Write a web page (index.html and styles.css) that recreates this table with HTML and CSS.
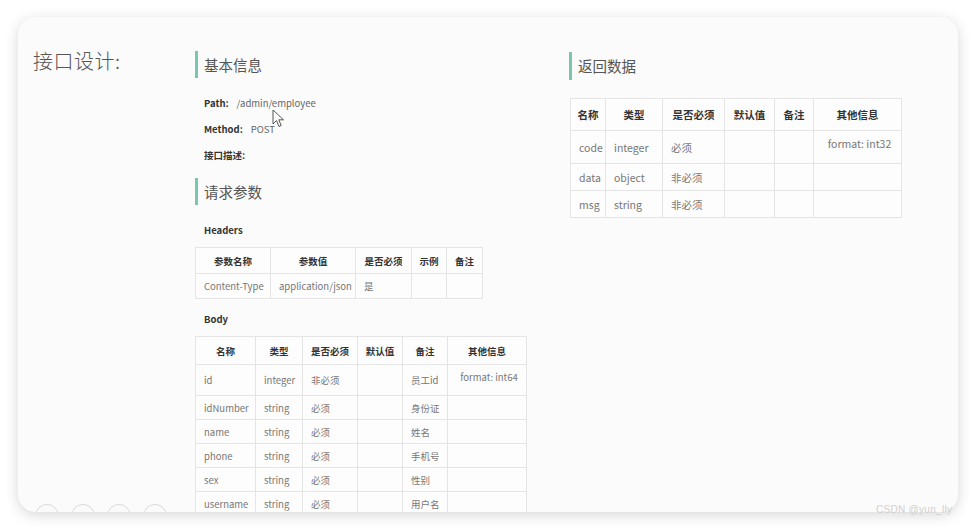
FILE: index.html
```html
<!DOCTYPE html>
<html lang="zh">
<head>
<meta charset="utf-8">
<link rel="stylesheet" href="styles.css">
</head>
<body>
<div class="card">
  <div class="title">接口设计:</div>
  <div class="col-left">
    <div class="heading">基本信息</div>
    <div class="info">
      <div class="line"><b>Path:</b><span class="val">/admin/employee</span></div>
      <div class="line"><b>Method:</b><span class="val">POST</span></div>
      <div class="line"><b>接口描述:</b></div>
    </div>
    <div class="heading h2">请求参数</div>
    <div class="label">Headers</div>
    <table class="tbl t-headers">
      <colgroup><col style="width:75px"><col style="width:85px"><col style="width:56px"><col style="width:35px"><col style="width:36px"></colgroup>
      <tr class="hd"><th>参数名称</th><th>参数值</th><th>是否必须</th><th>示例</th><th>备注</th></tr>
      <tr><td>Content-Type</td><td>application/json</td><td>是</td><td></td><td></td></tr>
    </table>
    <div class="label lb2">Body</div>
    <table class="tbl t-body">
      <colgroup><col style="width:60px"><col style="width:47px"><col style="width:55px"><col style="width:45px"><col style="width:45px"><col style="width:79px"></colgroup>
      <tr class="hd"><th>名称</th><th>类型</th><th>是否必须</th><th>默认值</th><th>备注</th><th>其他信息</th></tr>
      <tr class="tall"><td>id</td><td>integer</td><td>非必须</td><td></td><td>员工id</td><td class="fmt">format: int64</td></tr>
      <tr><td>idNumber</td><td>string</td><td>必须</td><td></td><td>身份证</td><td></td></tr>
      <tr><td>name</td><td>string</td><td>必须</td><td></td><td>姓名</td><td></td></tr>
      <tr><td>phone</td><td>string</td><td>必须</td><td></td><td>手机号</td><td></td></tr>
      <tr><td>sex</td><td>string</td><td>必须</td><td></td><td>性别</td><td></td></tr>
      <tr><td>username</td><td>string</td><td>必须</td><td></td><td>用户名</td><td></td></tr>
    </table>
  </div>
  <div class="col-right">
    <div class="heading hr">返回数据</div>
    <table class="tbl t-ret">
      <colgroup><col style="width:35px"><col style="width:57px"><col style="width:62px"><col style="width:50px"><col style="width:39px"><col style="width:88px"></colgroup>
      <tr class="hd hdr"><th>名称</th><th>类型</th><th>是否必须</th><th>默认值</th><th>备注</th><th>其他信息</th></tr>
      <tr class="r1"><td>code</td><td>integer</td><td>必须</td><td></td><td></td><td class="fmt">format: int32</td></tr>
      <tr class="r2"><td>data</td><td>object</td><td>非必须</td><td></td><td></td><td></td></tr>
      <tr class="r2"><td>msg</td><td>string</td><td>非必须</td><td></td><td></td><td></td></tr>
    </table>
  </div>
  <div class="controls"><span></span><span></span><span></span><span></span></div>
  <svg class="cursor" width="14" height="20" viewBox="0 0 14 20"><path d="M1 1 L1 15 L4.5 11.5 L7 17.5 L9.2 16.5 L6.8 10.8 L11.5 10.8 Z" fill="#fff" stroke="#555" stroke-width="1"/></svg>
</div>
<div class="wm">CSDN @yun_lly</div>
</body>
</html>
```
FILE: styles.css
```css
html, body { margin: 0; padding: 0; }
body {
  width: 977px; height: 530px; overflow: hidden;
  background: #ffffff;
  font-family: "Noto Sans CJK SC", "Noto Sans", sans-serif;
  position: relative;
}
.card {
  position: relative;
  margin: 17px 0 0 18px;
  width: 940px; height: 495px;
  background: #fbfbfb;
  border-radius: 18px;
  box-shadow: 0 3px 14px rgba(0,0,0,0.16);
  overflow: hidden;
  box-sizing: border-box;
  padding: 34px 0 0 15px;
  display: grid;
  grid-template-columns: 162px 374px 1fr;
  align-items: start;
}
.title {
  font-size: 20px; color: #555; line-height: 26px; margin-top: -3px;
  font-weight: 300;
  letter-spacing: 0.5px;
}
.heading {
  border-left: 3px solid #79c8ad;
  padding-left: 6px;
  height: 27px; line-height: 27px;
  font-size: 14.5px; color: #555;
}
.info { margin-top: 12px; }
.line { height: 26px; line-height: 26px; font-size: 9.5px; color: #333; padding-left: 9px; }
.line b { font-weight: 700; color: #333; }
.line .val { color: #666; margin-left: 8px; }
.h2 { margin-top: 10px; }
.label { margin-top: 12px; height: 26px; line-height: 26px; font-size: 9.5px; font-weight: 700; color: #333; padding-left: 9px; }
.lb2 { margin-top: 7px; }
.tbl {
  margin-top: 4px;
  border-collapse: collapse;
  table-layout: fixed;
  font-size: 9.5px;
  color: #777;
  background: #fdfdfd;
}
.tbl th, .tbl td {
  border: 1px solid #e5e5e5;
  padding: 0 0 0 8px;
  white-space: nowrap;
  overflow: hidden;
  text-align: left;
}
.tbl th { text-align: center; padding: 0; font-weight: 700; color: #333; }
.t-headers tr { height: 25px; }
.t-headers tr.hd { height: 26px; }
.t-body tr { height: 24px; }
.t-body tr.hd { height: 28px; }
.t-body tr.tall { height: 31px; }
.tbl td.fmt { text-align: center; vertical-align: top; padding: 5px 0 0 4px; }
.col-right { margin-left: 0; margin-top: 1px; }
.hr { height: 28px; line-height: 28px; }
.t-ret { margin-top: 18px; margin-left: 1px; font-size: 10.5px; }
.t-ret th { font-size: 10.5px; }
.t-ret tr.hdr { height: 32px; }
.t-ret tr.r1 { height: 33px; }
.t-ret tr.r2 { height: 27px; }
.t-ret td.fmt { padding-top: 5px; }
.controls {
  position: absolute; left: 17px; bottom: -16px;
  display: flex; gap: 12px;
}
.controls span {
  width: 22px; height: 22px; border-radius: 50%;
  border: 1px solid #d8d8d8; background: #fafafa;
}
.cursor { position: absolute; left: 254px; top: 92px; }
.wm {
  position: absolute; left: 876px; top: 504px;
  font-family: "Liberation Sans", sans-serif;
  font-size: 10px; color: #d0d0d0; letter-spacing: 0.3px;
}
```
